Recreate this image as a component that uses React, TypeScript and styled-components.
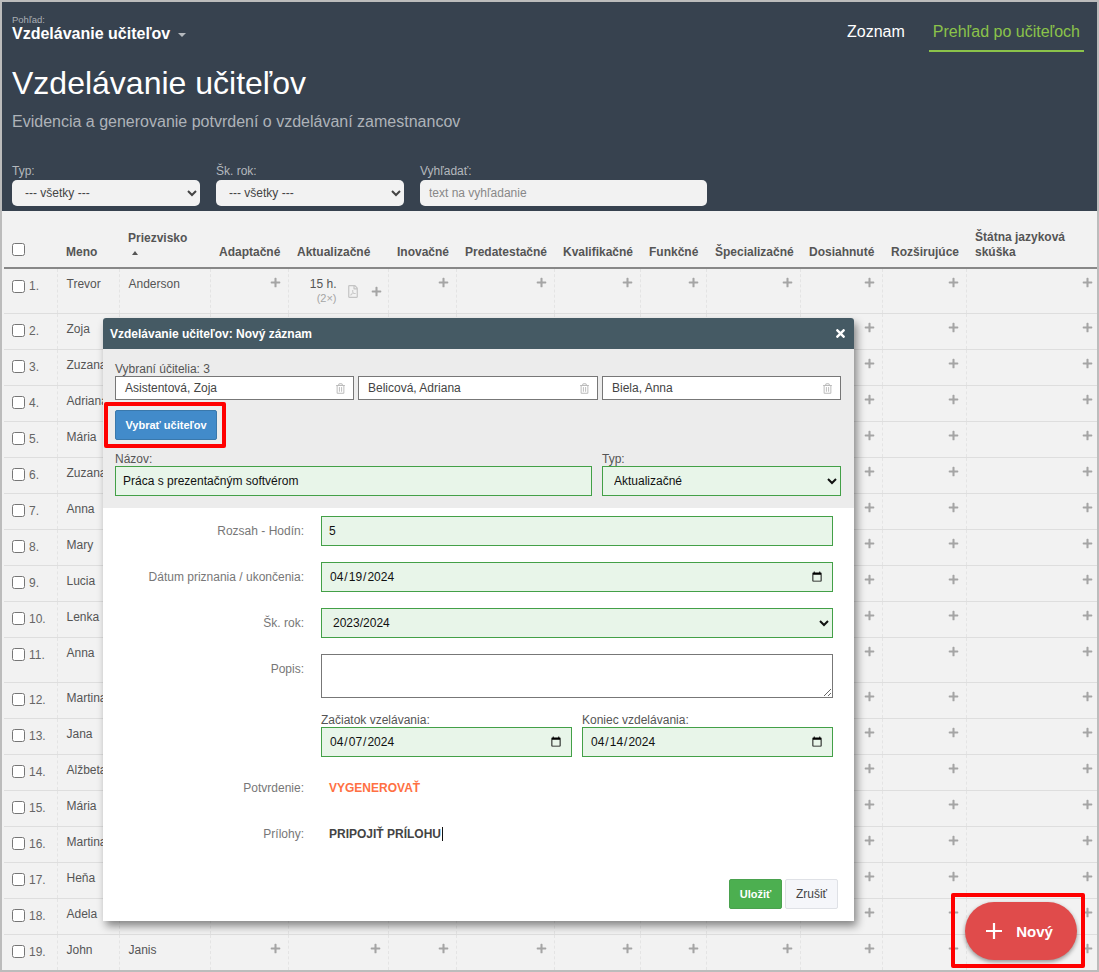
import React from "react";
import styled, { createGlobalStyle } from "styled-components";
import { FaPlus, FaRegFilePdf, FaRegTrashAlt, FaTimes } from "react-icons/fa";

const GlobalStyle = createGlobalStyle`
  html, body {
    margin: 0;
    padding: 0;
    background: #f2f2f2;
    font-family: "Liberation Sans", Arial, sans-serif;
  }
  * { box-sizing: border-box; }
`;

const Frame = styled.div`
  position: relative;
  width: 1099px;
  height: 972px;
  border: 2px solid #bcbcbc;
  overflow: hidden;
  background: #f2f2f2;
`;

const Header = styled.header`
  height: 209px;
  background: #37424f;
  padding: 13px 10px 0;
  display: flex;
  flex-direction: column;
`;

const TopBar = styled.div`
  display: flex;
  justify-content: space-between;
  height: 37px;
`;

const ViewLabel = styled.div`
  font-size: 9.5px;
  line-height: 10px;
  color: #a9aeb4;
`;

const ViewName = styled.div`
  display: flex;
  align-items: center;
  gap: 8px;
  font-size: 16px;
  line-height: 18px;
  font-weight: 700;
  color: #fff;
`;

const Caret = styled.span`
  display: block;
  margin-top: 2px;
  border-left: 4px solid transparent;
  border-right: 4px solid transparent;
  border-top: 4px solid #b5b9be;
`;

const Tabs = styled.nav`
  display: flex;
  margin-right: 3px;
`;

const Tab = styled.a<{ $active?: boolean }>`
  padding: 6px 4px 0;
  margin-left: 20px;
  height: 37px;
  font-size: 16px;
  line-height: 22px;
  color: ${(p) => (p.$active ? "#8bc34a" : "#fff")};
  border-bottom: 2px solid ${(p) => (p.$active ? "#8bc34a" : "transparent")};
`;

const Title = styled.h1`
  margin: 11px 0 0;
  font-size: 32px;
  line-height: 40px;
  font-weight: 400;
  color: #fff;
`;

const Subtitle = styled.p`
  margin: 9px 0 0;
  font-size: 16px;
  line-height: 20px;
  color: #aeb3b9;
`;

const Filters = styled.div`
  display: flex;
  gap: 16px;
  margin-top: 33px;
`;

const Filter = styled.label<{ $width: number }>`
  display: block;
  width: ${(p) => p.$width}px;
  font-size: 12px;
  line-height: 12px;
  color: #b4b8bd;
`;

const FilterSelect = styled.select`
  display: block;
  width: 100%;
  height: 26px;
  margin-top: 3px;
  padding: 0 9px;
  border: 0;
  border-radius: 5px;
  background: #f2f2f2;
  color: #444;
  font: 12px "Liberation Sans", Arial, sans-serif;
`;

const FilterInput = styled.input`
  display: block;
  width: 100%;
  height: 26px;
  margin-top: 3px;
  padding: 0 9px;
  border: 0;
  border-radius: 5px;
  background: #f2f2f2;
  font: 12px "Liberation Sans", Arial, sans-serif;
  &::placeholder { color: #888; opacity: 1; }
`;

const TableWrap = styled.div`
  padding-left: 2px;
`;

const Table = styled.table`
  width: 1093px;
  table-layout: fixed;
  border-collapse: collapse;
`;

const Th = styled.th`
  height: 57px;
  padding: 0 4px 7px 9px;
  vertical-align: bottom;
  text-align: left;
  font-size: 12px;
  line-height: 15px;
  font-weight: 700;
  color: #555;
  border-bottom: 2px solid #888;
`;

const CheckTh = styled(Th)`
  padding: 0 0 7px 8px;
`;

const SortArrow = styled.span`
  display: block;
  width: 0;
  margin: 5px 0 5px 4px;
  border-left: 3.5px solid transparent;
  border-right: 3.5px solid transparent;
  border-bottom: 4px solid #555;
`;

const Row = styled.tr<{ $height: number }>`
  height: ${(p) => p.$height}px;
  border-bottom: 1px solid #dedede;
`;

const Td = styled.td`
  padding: 8px 9px 0;
  vertical-align: top;
  font-size: 12px;
  line-height: 14px;
  color: #555;
  border-right: 1px dashed #e4e4e4;
  overflow: hidden;
  white-space: nowrap;
`;

const CheckTd = styled(Td)`
  padding: 10px 0 0 8px;
  color: #666;
`;

const CheckInner = styled.span`
  display: flex;
  align-items: center;
  gap: 4px;
`;

const Checkbox = styled.input.attrs({ type: "checkbox" })`
  width: 13px;
  height: 13px;
  margin: 0;
  flex: none;
`;

const AddTd = styled(Td)`
  padding: 8px 7px 0 0;
  text-align: right;
  &:last-child { border-right: 0; padding-right: 4px; }
`;

const Plus = styled(FaPlus)`
  display: inline-block;
  width: 11px;
  height: 11px;
  color: #a5a5a5;
`;

const RecordCell = styled.div`
  display: flex;
  justify-content: flex-end;
  align-items: center;
  gap: 10px;
  margin-right: -1px;
`;

const Hours = styled.div`
  text-align: right;
  line-height: 14px;
`;

const HoursCount = styled.div`
  font-size: 11px;
  color: #a5a5a5;
`;

const PdfIcon = styled(FaRegFilePdf)`
  width: 10px;
  height: 13px;
  margin: 0 3px 0 1px;
  color: #c4c4c4;
`;

const Modal = styled.div`
  position: absolute;
  left: 101px;
  top: 316px;
  width: 751px;
  height: 603px;
  display: flex;
  flex-direction: column;
  background: #fff;
  border-radius: 3px 3px 0 0;
  box-shadow: 3px 5px 9px rgba(0, 0, 0, 0.45);
`;

const ModalHead = styled.div`
  flex: none;
  height: 31px;
  padding: 0 8px 0 7px;
  display: flex;
  align-items: center;
  justify-content: space-between;
  background: #455a64;
  border-radius: 3px 3px 0 0;
  color: #fff;
  font-size: 12px;
  font-weight: 700;
`;

const CloseIcon = styled(FaTimes)`
  width: 11px;
  height: 13px;
`;

const GreySection = styled.section`
  flex: none;
  height: 159px;
  padding: 14px 13px 0 12px;
  background: #ececec;
`;

const SmallLabel = styled.div`
  font-size: 12px;
  line-height: 13px;
  color: #555;
`;

const Chips = styled.div`
  display: grid;
  grid-template-columns: 239px 240px 239px;
  gap: 4px;
`;

const Chip = styled.div`
  height: 24px;
  padding: 0 8px 0 9px;
  display: flex;
  align-items: center;
  justify-content: space-between;
  background: #fff;
  border: 1px solid #777;
  font-size: 12px;
  color: #444;
`;

const TrashIcon = styled(FaRegTrashAlt)`
  width: 9px;
  height: 11px;
  color: #bbb;
`;

const PrimaryButton = styled.button`
  position: relative;
  display: block;
  width: 102px;
  height: 30px;
  margin: 10px 0 0;
  padding: 0;
  border: 1px solid #3a78ab;
  border-radius: 2px;
  background: #428bca;
  color: #fff;
  font: 700 11px "Liberation Sans", Arial, sans-serif;
`;

const Highlight = styled.span`
  position: absolute;
  border: 4px solid #f00;
  border-radius: 2px;
  pointer-events: none;
`;

const ButtonHighlight = styled(Highlight)`
  left: -12px;
  top: -9px;
  width: 122px;
  height: 46px;
`;

const NameRow = styled.div`
  display: grid;
  grid-template-columns: 477px 239px;
  gap: 10px;
  margin-top: 13px;
`;

const validField = `
  border: 1px solid #43a047;
  background-color: #e8f5e9;
  color: #111;
  font: 12px "Liberation Sans", Arial, sans-serif;
  outline: 0;
`;

const FieldInput = styled.input`
  display: block;
  width: 100%;
  height: 30px;
  padding: 0 7px;
  ${validField}
`;

const FieldSelect = styled.select`
  display: block;
  width: 100%;
  height: 30px;
  padding: 0 7px;
  ${validField}
`;

const WhiteSection = styled.section`
  flex: 1;
  padding: 8px 21px 0 0;
  display: flex;
  flex-direction: column;
`;

const FormRow = styled.div<{ $gap?: number }>`
  display: grid;
  grid-template-columns: 201px 1fr;
  column-gap: 17px;
  margin-bottom: ${(p) => p.$gap ?? 16}px;
`;

const RowLabel = styled.div<{ $top?: number }>`
  padding-top: ${(p) => p.$top ?? 8}px;
  text-align: right;
  font-size: 12px;
  line-height: 14px;
  color: #777;
`;

const Popis = styled.textarea`
  display: block;
  width: 100%;
  height: 44px;
  margin: 0;
  border: 1px solid #777;
  background: #fff;
`;

const TwoDates = styled.div`
  display: grid;
  grid-template-columns: 251px 251px;
  gap: 10px;
`;

const LinkText = styled.div<{ $orange?: boolean }>`
  padding-left: 8px;
  font-size: 12px;
  line-height: 14px;
  font-weight: 700;
  color: ${(p) => (p.$orange ? "#ff7043" : "#444")};
`;

const TextCaret = styled.span`
  display: inline-block;
  width: 1px;
  height: 14px;
  margin-left: 1px;
  vertical-align: top;
  background: #111;
`;

const ModalFoot = styled.div`
  display: flex;
  justify-content: flex-end;
  gap: 3px;
  margin: 38px -5px 0 0;
`;

const SaveButton = styled.button`
  width: 53px;
  height: 30px;
  padding: 0;
  border: 1px solid #4aa14e;
  border-radius: 2px;
  background: #4caf50;
  color: #fff;
  font: 700 11px "Liberation Sans", Arial, sans-serif;
`;

const CancelButton = styled.button`
  width: 53px;
  height: 30px;
  padding: 0;
  border: 1px solid #dfe1e6;
  border-radius: 2px;
  background: #f5f6fa;
  color: #444;
  font: 12px "Liberation Sans", Arial, sans-serif;
`;

const Fab = styled.button`
  position: absolute;
  left: 963px;
  top: 900px;
  width: 112px;
  height: 58px;
  padding: 0 4px 0 0;
  display: flex;
  align-items: center;
  justify-content: center;
  gap: 13px;
  border: 0;
  border-radius: 29px;
  background: #e04b4b;
  color: #fff;
  font: 700 15px "Liberation Sans", Arial, sans-serif;
  box-shadow: 0 2px 4px rgba(0, 0, 0, 0.4);
`;

const FabHighlight = styled(Highlight)`
  left: 949px;
  top: 891px;
  width: 134px;
  height: 75px;
`;

const FabPlus = styled.svg`
  width: 18px;
  height: 18px;
`;

const columnWidths = [53, 62, 91, 78, 100, 68, 98, 86, 66, 94, 82, 84, 131];

const recordColumns = [
  "Adaptačné",
  "Aktualizačné",
  "Inovačné",
  "Predatestačné",
  "Kvalifikačné",
  "Funkčné",
  "Špecializačné",
  "Dosiahnuté",
  "Rozširujúce",
  "Štátna jazyková skúška",
];

const people = [
  { first: "Trevor", last: "Anderson", height: 45 },
  { first: "Zoja", last: "", height: 36 },
  { first: "Zuzana", last: "", height: 36 },
  { first: "Adriana", last: "", height: 36 },
  { first: "Mária", last: "", height: 36 },
  { first: "Zuzana", last: "", height: 36 },
  { first: "Anna", last: "", height: 36 },
  { first: "Mary", last: "", height: 36 },
  { first: "Lucia", last: "", height: 36 },
  { first: "Lenka", last: "", height: 36 },
  { first: "Anna", last: "", height: 45 },
  { first: "Martina", last: "", height: 36 },
  { first: "Jana", last: "", height: 36 },
  { first: "Alžbeta", last: "", height: 36 },
  { first: "Mária", last: "", height: 36 },
  { first: "Martina", last: "", height: 36 },
  { first: "Heňa", last: "", height: 36 },
  { first: "Adela", last: "", height: 36 },
  { first: "John", last: "Janis", height: 36 },
];

const teachers = ["Asistentová, Zoja", "Belicová, Adriana", "Biela, Anna"];

const App = () => {
  return (
    <Frame>
      <GlobalStyle />
      <Header>
        <TopBar>
          <div>
            <ViewLabel>Pohľad:</ViewLabel>
            <ViewName>
              Vzdelávanie učiteľov
              <Caret />
            </ViewName>
          </div>
          <Tabs>
            <Tab>Zoznam</Tab>
            <Tab $active>Prehľad po učiteľoch</Tab>
          </Tabs>
        </TopBar>
        <Title>Vzdelávanie učiteľov</Title>
        <Subtitle>Evidencia a generovanie potvrdení o vzdelávaní zamestnancov</Subtitle>
        <Filters>
          <Filter $width={188}>
            Typ:
            <FilterSelect defaultValue="all">
              <option value="all">--- všetky ---</option>
            </FilterSelect>
          </Filter>
          <Filter $width={188}>
            Šk. rok:
            <FilterSelect defaultValue="all">
              <option value="all">--- všetky ---</option>
            </FilterSelect>
          </Filter>
          <Filter $width={287}>
            Vyhľadať:
            <FilterInput placeholder="text na vyhľadanie" />
          </Filter>
        </Filters>
      </Header>

      <TableWrap>
        <Table>
          <colgroup>
            {columnWidths.map((w, i) => (
              <col key={i} width={w} />
            ))}
          </colgroup>
          <thead>
            <tr>
              <CheckTh>
                <Checkbox />
              </CheckTh>
              <Th>Meno</Th>
              <Th>
                Priezvisko
                <SortArrow />
              </Th>
              {recordColumns.map((name) => (
                <Th key={name}>{name}</Th>
              ))}
            </tr>
          </thead>
          <tbody>
            {people.map((person, i) => (
              <Row key={i} $height={person.height}>
                <CheckTd>
                  <CheckInner>
                    <Checkbox />
                    {i + 1}.
                  </CheckInner>
                </CheckTd>
                <Td>{person.first}</Td>
                <Td>{person.last}</Td>
                {recordColumns.map((name) => (
                  <AddTd key={name}>
                    {i === 0 && name === "Aktualizačné" ? (
                      <RecordCell>
                        <Hours>
                          15 h.
                          <HoursCount>(2×)</HoursCount>
                        </Hours>
                        <PdfIcon />
                        <Plus />
                      </RecordCell>
                    ) : (
                      <Plus />
                    )}
                  </AddTd>
                ))}
              </Row>
            ))}
          </tbody>
        </Table>
      </TableWrap>

      <Modal>
        <ModalHead>
          Vzdelávanie učiteľov: Nový záznam
          <CloseIcon />
        </ModalHead>
        <GreySection>
          <SmallLabel>Vybraní účitelia: 3</SmallLabel>
          <Chips>
            {teachers.map((t) => (
              <Chip key={t}>
                {t}
                <TrashIcon />
              </Chip>
            ))}
          </Chips>
          <PrimaryButton>
            Vybrať učiteľov
            <ButtonHighlight />
          </PrimaryButton>
          <NameRow>
            <div>
              <SmallLabel>Názov:</SmallLabel>
              <FieldInput defaultValue="Práca s prezentačným softvérom" />
            </div>
            <div>
              <SmallLabel>Typ:</SmallLabel>
              <FieldSelect defaultValue="a">
                <option value="a">Aktualizačné</option>
              </FieldSelect>
            </div>
          </NameRow>
        </GreySection>
        <WhiteSection>
          <FormRow>
            <RowLabel>Rozsah - Hodín:</RowLabel>
            <FieldInput defaultValue="5" />
          </FormRow>
          <FormRow>
            <RowLabel>Dátum priznania / ukončenia:</RowLabel>
            <FieldInput type="date" defaultValue="2024-04-19" />
          </FormRow>
          <FormRow>
            <RowLabel>Šk. rok:</RowLabel>
            <FieldSelect defaultValue="y">
              <option value="y">2023/2024</option>
            </FieldSelect>
          </FormRow>
          <FormRow $gap={16}>
            <RowLabel>Popis:</RowLabel>
            <Popis />
          </FormRow>
          <FormRow $gap={24}>
            <div />
            <TwoDates>
              <div>
                <SmallLabel>Začiatok vzelávania:</SmallLabel>
                <FieldInput type="date" defaultValue="2024-04-07" />
              </div>
              <div>
                <SmallLabel>Koniec vzdelávania:</SmallLabel>
                <FieldInput type="date" defaultValue="2024-04-14" />
              </div>
            </TwoDates>
          </FormRow>
          <FormRow $gap={32}>
            <RowLabel $top={0}>Potvrdenie:</RowLabel>
            <LinkText $orange>VYGENEROVAŤ</LinkText>
          </FormRow>
          <FormRow $gap={0}>
            <RowLabel $top={0}>Prílohy:</RowLabel>
            <LinkText>
              PRIPOJIŤ PRÍLOHU
              <TextCaret />
            </LinkText>
          </FormRow>
          <ModalFoot>
            <SaveButton>Uložiť</SaveButton>
            <CancelButton>Zrušiť</CancelButton>
          </ModalFoot>
        </WhiteSection>
      </Modal>

      <Fab>
        <FabPlus viewBox="0 0 18 18">
          <path d="M9 1v16M1 9h16" stroke="#fff" strokeWidth="2.2" fill="none" />
        </FabPlus>
        Nový
      </Fab>
      <FabHighlight />
    </Frame>
  );
};

export default App;
